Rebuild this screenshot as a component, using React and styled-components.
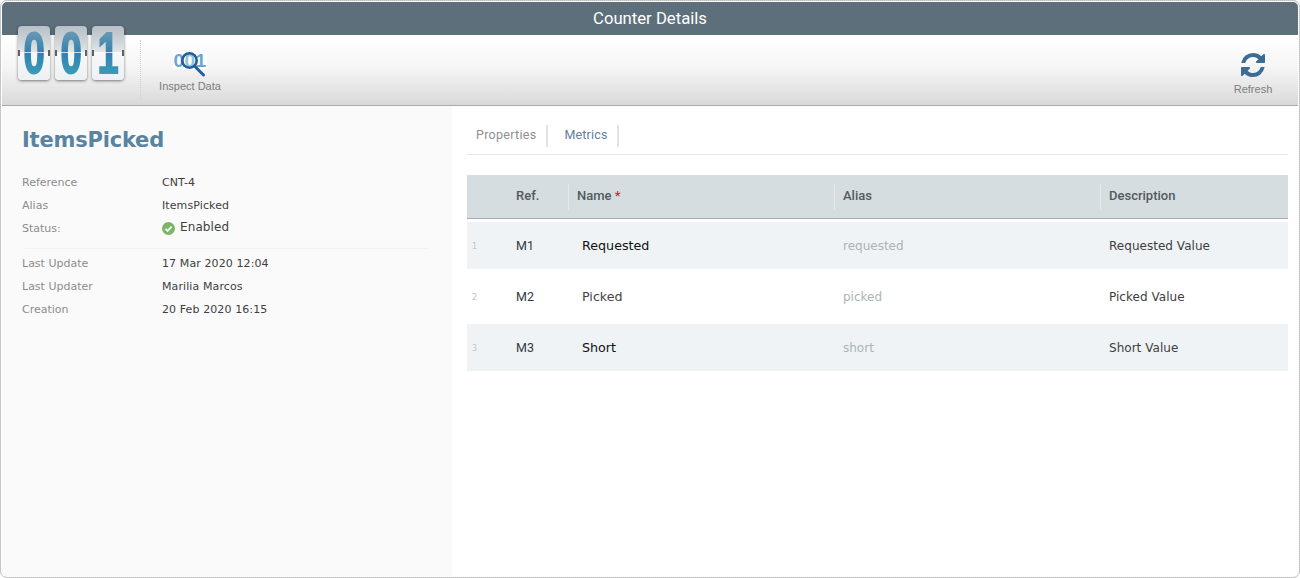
import React from "react";
import styled, { createGlobalStyle } from "styled-components";

const Global = createGlobalStyle`
  html, body { margin: 0; padding: 0; background: #fff; height: 100%; }
  #root { height: 100%; }
`;

const Frame = styled.div`
  box-sizing: border-box;
  width: 1300px;
  height: 578px;
  border: 1px solid #bdbdbd;
  outline: 1px dotted #d0d0d0;
  outline-offset: -1px;
  border-radius: 7px;
  padding: 1px;
  overflow: hidden;
  display: flex;
  flex-direction: column;
  background: #fff;
`;
const TitleBar = styled.div`
  height: 33px;
  flex: none;
  background: #5d6f7b;
  color: #fff;
  font: 16.7px/33px Roboto, sans-serif;
  text-align: center;
  border-radius: 5px 5px 0 0;
`;
const Toolbar = styled.div`
  height: 71px;
  flex: none;
  box-sizing: border-box;
  border-bottom: 1px solid #a9a9a9;
  background: linear-gradient(#ffffff 0%, #f6f6f6 45%, #d9d9d9 100%);
  display: flex;
  align-items: flex-start;
  padding-left: 16px;
  padding-right: 25px;
`;
const Counter = styled.div`
  display: flex;
  gap: 5px;
  margin-top: -9px;
  flex: none;
`;
const Tile = styled.div`
  position: relative;
  width: 32px;
  height: 54px;
  border-radius: 4px;
  background: linear-gradient(#b6c0c6 0%, #cfd5d9 30%, #e2e6e8 48%, #f6f8f9 50%, #eef1f3 100%);
  box-shadow: 0 1px 3px rgba(0, 0, 0, 0.5);
  display: flex;
  justify-content: center;
`;
const Digit = styled.span`
  flex: none;
  display: block;
  font: bold 58px/54px "Liberation Sans", sans-serif;
  -webkit-text-stroke: 2px transparent;
  background: linear-gradient(#6d9ab4 8%, #2f82b0 50%, #3c9cb8 90%);
  -webkit-background-clip: text;
  background-clip: text;
  color: transparent;
  transform: scaleX(0.66);
`;
const Hinge = styled.span`
  position: absolute;
  left: 0;
  right: 0;
  top: 26px;
  height: 1px;
  background: rgba(255, 255, 255, 0.75);
  &::before, &::after {
    content: "";
    position: absolute;
    top: -2px;
    width: 2px;
    height: 6px;
    background: #5b6266;
  }
  &::before { left: 0; }
  &::after { right: 0; }
`;
const ToolDivider = styled.div`
  width: 0;
  height: 60px;
  margin: 5px 0 0 16px;
  border-left: 1px dotted #cfcfcf;
`;
const ToolButton = styled.div`
  width: ${(p) => p.$w}px;
  margin-left: ${(p) => p.$ml || 0}px;
  padding-top: ${(p) => p.$pt}px;
  display: flex;
  flex-direction: column;
  align-items: center;
  color: #7d7d7d;
  font: 11px/13px "Liberation Sans", sans-serif;
  gap: ${(p) => p.$gap}px;
`;
const Spacer = styled.div`
  flex: 1;
`;
const InspectIcon = styled.div`
  position: relative;
  width: 34px;
  height: 27px;
  svg { display: block; position: absolute; left: 0; top: 0; }
`;
const BitText = styled.span`
  position: absolute;
  left: 0;
  top: 0;
  width: 34px;
  height: 17px;
  background: #fff;
  color: #6aa6cf;
  font: bold 19px/17px "Liberation Sans", sans-serif;
  letter-spacing: 0.5px;
  text-align: center;
  white-space: nowrap;
`;
const Body = styled.div`
  flex: 1;
  display: flex;
  min-height: 0;
`;
const Side = styled.aside`
  width: 450px;
  flex: none;
  box-sizing: border-box;
  background: #fafafa;
  padding: 21px 24px 0 20px;
  font: 11px/23px "DejaVu Sans", Verdana, sans-serif;
`;
const Heading = styled.h1`
  margin: 0 0 18px;
  color: #5a83a1;
  font: bold 21px/26px "DejaVu Sans", Verdana, sans-serif;
  letter-spacing: -0.2px;
`;
const InfoRow = styled.div`
  display: flex;
  height: 23px;
`;
const InfoLabel = styled.div`
  width: 140px;
  flex: none;
  color: #8c8c8c;
`;
const InfoValue = styled.div`
  color: #3e3e3e;
  display: flex;
  align-items: center;
  gap: 5px;
  letter-spacing: 0.1px;
`;
const StatusText = styled.span`
  font-size: 12px;
  position: relative;
  top: -1px;
`;
const Rule = styled.div`
  height: 1px;
  background: #f3f3f3;
  margin: 8px 0 3px 3px;
`;
const Main = styled.main`
  flex: 1;
  min-width: 0;
  padding: 19px 10px 0 15px;
`;
const Tabs = styled.div`
  display: flex;
  height: 29px;
  border-bottom: 1px solid #e8e8e8;
  margin-bottom: 20px;
`;
const Tab = styled.div`
  height: 22px;
  box-sizing: border-box;
  padding: 0 ${(p) => p.$pr}px 0 ${(p) => p.$pl}px;
  border-right: 2px solid #dfe3e6;
  color: ${(p) => (p.$active ? "#5f7f9b" : "#8f8f8f")};
  font: 12.5px/19px Roboto, sans-serif;
  letter-spacing: ${(p) => (p.$active ? "0.15px" : "0.3px")};
`;
const Table = styled.div`
  width: 821px;
`;
const gridColumns = "102px 266px 266px 1fr";
const HeadRow = styled.div`
  display: grid;
  grid-template-columns: ${gridColumns};
  height: 44px;
  box-sizing: border-box;
  background: #d6dde1;
  border-bottom: 1px solid #a3acb2;
  align-items: center;
  color: #505a60;
  font: 500 13px/20px Roboto, sans-serif;
`;
const HeadCell = styled.div`
  height: 26px;
  line-height: 24px;
  padding-left: ${(p) => p.$pl}px;
  border-right: ${(p) => (p.$sep ? "1px solid #e4e9ec" : "none")};
`;
const Star = styled.span`
  color: #b03a3a;
`;
const Row = styled.div`
  display: grid;
  grid-template-columns: ${gridColumns};
  height: ${(p) => p.$h}px;
  margin-top: ${(p) => p.$mt}px;
  align-items: center;
  background: ${(p) => (p.$odd ? "#eff3f6" : "#fff")};
  font: 12px/18px "DejaVu Sans", Verdana, sans-serif;
  color: #333;
`;
const RefCell = styled.div`
  position: relative;
  padding-left: 49px;
  font: 400 12.5px/18px Roboto, sans-serif;
  color: #333a3f;
`;
const Index = styled.span`
  position: absolute;
  left: 5px;
  top: 1px;
  font: 8px/18px "DejaVu Sans", sans-serif;
  color: #c4c4c4;
`;
const NameCell = styled.div`
  padding-left: 13px;
  font-size: 12.7px;
  color: ${(p) => (p.$strong ? "#111" : "#444")};
`;
const AliasCell = styled.div`
  padding-left: 8px;
  color: #aab4ba;
`;
const DescCell = styled.div`
  padding-left: 8px;
  color: #3e3e3e;
  letter-spacing: 0.03px;
`;

const rows = [
  { n: 1, ref: "M1", name: "Requested", alias: "requested", desc: "Requested Value", odd: true, h: 47, mt: 3, strong: true },
  { n: 2, ref: "M2", name: "Picked", alias: "picked", desc: "Picked Value", odd: false, h: 55, mt: 0 },
  { n: 3, ref: "M3", name: "Short", alias: "short", desc: "Short Value", odd: true, h: 47, mt: 0, strong: true },
];

export default function App() {
  return (
    <Frame>
      <Global />
      <TitleBar>Counter Details</TitleBar>
      <Toolbar>
        <Counter>
          {["0", "0", "1"].map((d, i) => (
            <Tile key={i}>
              <Digit>{d}</Digit>
              <Hinge />
            </Tile>
          ))}
        </Counter>
        <ToolDivider />
        <ToolButton $w={94} $ml={2} $pt={17} $gap={1}>
          <InspectIcon>
            <BitText>001</BitText>
            <svg width="34" height="27" viewBox="0 0 34 27">
              <circle cx="16.500" cy="8.500" r="7.200" fill="rgba(255,255,255,0.3)" stroke="#1f5f9c" strokeWidth="2.600" />
              <path d="M21.500 14 L30.500 23" stroke="#1f5f9c" strokeWidth="3" strokeLinecap="round" />
            </svg>
          </InspectIcon>
          Inspect Data
        </ToolButton>
        <Spacer />
        <ToolButton $w={40} $pt={17} $gap={5}>
          <svg width="24" height="26" viewBox="0 0 1536 1536">
            <path
              fill="#3b6d94"
              d="M1511 928q0 5-1 7-64 268-268 434.500T764 1536q-146 0-282.500-55T238 1324l-129 129q-19 19-45 19t-45-19-19-45V960q0-26 19-45t45-19h448q26 0 45 19t19 45-19 45l-137 137q71 66 161 102t187 36q134 0 250-65t186-179q11-17 53-117 8-23 30-23h192q13 0 22.500 9.500t9.500 22.500zm25-800v448q0 26-19 45t-45 19h-448q-26 0-45-19t-19-45 19-45l138-138Q969 256 768 256q-134 0-250 65T332 500q-11 17-53 117-8 23-30 23H50q-13 0-22.500-9.500T18 608v-7q65-268 270-434.500T768 0q146 0 284 55.500T1297 212l130-129q19-19 45-19t45 19 19 45z"
            />
          </svg>
          Refresh
        </ToolButton>
      </Toolbar>
      <Body>
        <Side>
          <Heading>ItemsPicked</Heading>
          <InfoRow>
            <InfoLabel>Reference</InfoLabel>
            <InfoValue>CNT-4</InfoValue>
          </InfoRow>
          <InfoRow>
            <InfoLabel>Alias</InfoLabel>
            <InfoValue>ItemsPicked</InfoValue>
          </InfoRow>
          <InfoRow>
            <InfoLabel>Status:</InfoLabel>
            <InfoValue>
              <svg width="13" height="13" viewBox="0 0 13 13">
                <circle cx="6.500" cy="6.500" r="6.500" fill="#7cb564" />
                <path d="M3.500 6.800 L5.600 8.900 L9.600 4.600" fill="none" stroke="#fff" strokeWidth="1.800" />
              </svg>
              <StatusText>Enabled</StatusText>
            </InfoValue>
          </InfoRow>
          <Rule />
          <InfoRow>
            <InfoLabel>Last Update</InfoLabel>
            <InfoValue>17 Mar 2020 12:04</InfoValue>
          </InfoRow>
          <InfoRow>
            <InfoLabel>Last Updater</InfoLabel>
            <InfoValue>Marilia Marcos</InfoValue>
          </InfoRow>
          <InfoRow>
            <InfoLabel>Creation</InfoLabel>
            <InfoValue>20 Feb 2020 16:15</InfoValue>
          </InfoRow>
        </Side>
        <Main>
          <Tabs>
            <Tab $pl={9} $pr={9}>Properties</Tab>
            <Tab $pl={17} $pr={10} $active>Metrics</Tab>
          </Tabs>
          <Table>
            <HeadRow>
              <HeadCell $pl={49} $sep>Ref.</HeadCell>
              <HeadCell $pl={8} $sep>
                Name <Star>*</Star>
              </HeadCell>
              <HeadCell $pl={8} $sep>Alias</HeadCell>
              <HeadCell $pl={8}>Description</HeadCell>
            </HeadRow>
            {rows.map((r) => (
              <Row key={r.n} $odd={r.odd} $h={r.h} $mt={r.mt}>
                <RefCell>
                  <Index>{r.n}</Index>
                  {r.ref}
                </RefCell>
                <NameCell $strong={r.strong}>{r.name}</NameCell>
                <AliasCell>{r.alias}</AliasCell>
                <DescCell>{r.desc}</DescCell>
              </Row>
            ))}
          </Table>
        </Main>
      </Body>
    </Frame>
  );
}
